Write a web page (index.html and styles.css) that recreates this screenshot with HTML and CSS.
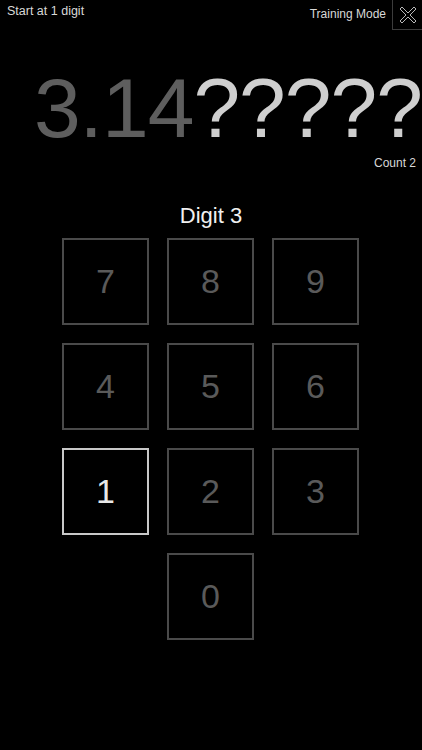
FILE: index.html
```html
<!DOCTYPE html>
<html>
<head>
<meta charset="utf-8">
<link rel="stylesheet" href="styles.css">
</head>
<body>
<div class="screen">
  <header class="topbar">
    <div class="start">Start at 1 digit</div>
    <div class="mode">
      <span class="mode-label">Training Mode</span>
      <div class="close">
        <svg width="22" height="22" viewBox="0 0 22 22">
          <path d="M3 5 L5 3 L11 9 L17 3 L19 5 L13 11 L19 17 L17 19 L11 13 L5 19 L3 17 L9 11 Z" fill="none" stroke="#b8b8b8" stroke-width="1" stroke-linejoin="round"/>
        </svg>
      </div>
    </div>
  </header>
  <div class="number"><span class="known">3.14</span><span class="unknown">?????</span></div>
  <div class="count">Count 2</div>
  <div class="digit-title">Digit 3</div>
  <div class="keypad">
    <div class="key">7</div>
    <div class="key">8</div>
    <div class="key">9</div>
    <div class="key">4</div>
    <div class="key">5</div>
    <div class="key">6</div>
    <div class="key active">1</div>
    <div class="key">2</div>
    <div class="key">3</div>
    <div class="key zero">0</div>
  </div>
</div>
</body>
</html>
```
FILE: styles.css
```css
html, body {
  margin: 0;
  padding: 0;
  background: #000;
}
body {
  font-family: "Liberation Sans", Arial, Helvetica, sans-serif;
  color: #e0e0e0;
}
.screen {
  width: 422px;
  height: 750px;
  overflow: hidden;
  display: flex;
  flex-direction: column;
}
.topbar {
  display: flex;
  justify-content: space-between;
  align-items: flex-start;
  height: 30px;
}
.start {
  font-size: 12.5px;
  color: #d8d8d8;
  padding: 4px 0 0 7px;
}
.mode {
  display: flex;
  align-items: flex-start;
}
.mode-label {
  font-size: 12px;
  color: #d8d8d8;
  padding-top: 7px;
  margin-right: 6px;
}
.close {
  width: 29px;
  height: 29px;
  border: 1px solid #3c3c3c;
  border-top: none;
  border-right: none;
  display: flex;
  align-items: center;
  justify-content: center;
}
.number {
  font-size: 84px;
  line-height: 84px;
  height: 84px;
  letter-spacing: -1px;
  margin-top: 36px;
  text-align: right;
  white-space: nowrap;
}
.known {
  color: #5e5e5e;
}
.unknown {
  color: #cfcfcf;
}
.count {
  font-size: 12px;
  color: #d8d8d8;
  text-align: right;
  padding-right: 6px;
  margin-top: 6px;
}
.digit-title {
  font-size: 22px;
  color: #f0f0f0;
  text-align: center;
  margin-top: 33px;
}
.keypad {
  display: grid;
  grid-template-columns: repeat(3, 87px);
  grid-auto-rows: 87px;
  gap: 18px;
  justify-content: center;
  margin-top: 9px;
  padding-right: 1px;
}
.key {
  box-sizing: border-box;
  border: 2px solid #4a4a4a;
  display: flex;
  align-items: center;
  justify-content: center;
  font-size: 34px;
  color: #5a5a5a;
}
.key.active {
  border-color: #c8c8c8;
  color: #e8e8e8;
}
.key.zero {
  grid-column: 2;
}
```
